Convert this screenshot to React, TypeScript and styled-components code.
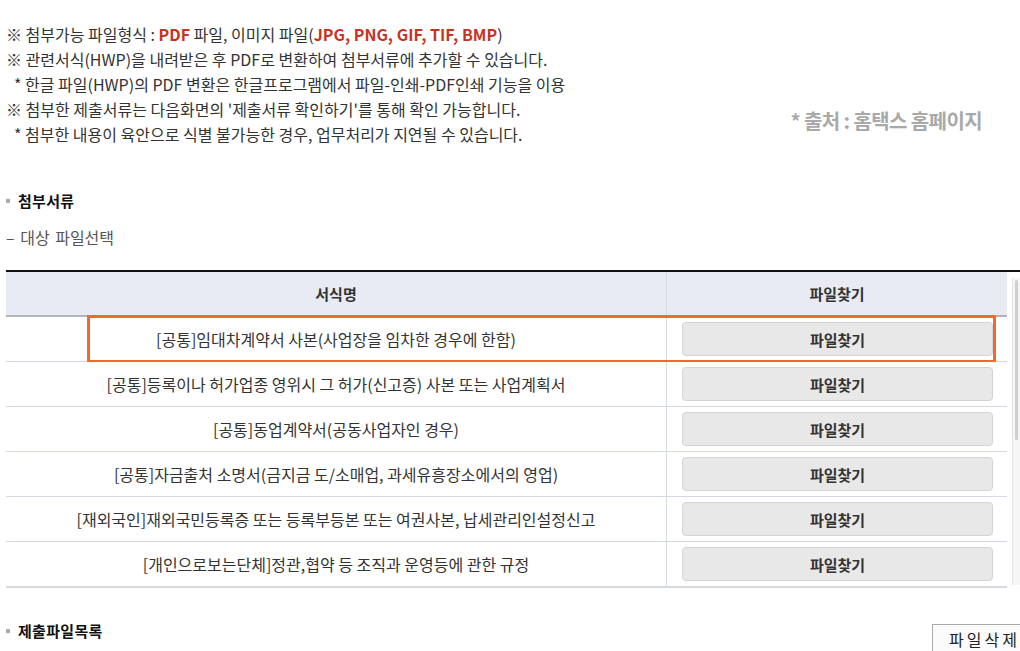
import React from "react";
import styled, { createGlobalStyle } from "styled-components";

const GlobalStyle = createGlobalStyle`
  html, body {
    margin: 0;
    padding: 0;
    background: #fff;
    overflow: hidden;
  }
  body {
    font-family: "Noto Sans CJK KR", "Noto Sans", sans-serif;
    color: #333;
  }
`;

const Page = styled.div`
  width: 1020px;
  padding-left: 6px;
  box-sizing: border-box;
`;

const NoticeArea = styled.div`
  display: flex;
  justify-content: space-between;
  padding-top: 22px;
`;

const Notes = styled.div`
  font-size: 16px;
  line-height: 25px;
`;

const NoteLine = styled.div<{ $sub?: boolean }>`
  padding-left: ${(p) => (p.$sub ? "8px" : "0")};
  white-space: nowrap;
`;

const Red = styled.b`
  color: #c8321f;
`;

const Source = styled.div`
  align-self: flex-end;
  margin: 0 38px 14px 0;
  font-size: 20px;
  line-height: 24px;
  font-weight: 700;
  color: #a9a9a9;
  letter-spacing: -0.6px;
`;

const SectionTitle = styled.div<{ $top: number }>`
  display: flex;
  align-items: center;
  gap: 8px;
  margin-top: ${(p) => p.$top}px;
  font-size: 15px;
  line-height: 22px;
  font-weight: 700;
  color: #111;
  letter-spacing: 0.3px;

  &::before {
    content: "";
    width: 4px;
    height: 4px;
    background: #a8a8a8;
  }
`;

const SubTitle = styled.div`
  margin-top: 14px;
  font-size: 16px;
  line-height: 22px;
  color: #555;
  word-spacing: 2px;
`;

const TableArea = styled.div`
  margin-top: 22px;
  border-top: 2px solid #111;
  display: flex;
`;

const Table = styled.div`
  width: 1001px;
`;

const Row = styled.div<{ $head?: boolean }>`
  position: relative;
  display: grid;
  grid-template-columns: 660px 1fr;
  height: ${(p) => (p.$head ? "43px" : "44px")};
  background: ${(p) => (p.$head ? "#e8ebf3" : "#fff")};
  border-bottom: ${(p) => (p.$head ? "2px solid #b4b4b4" : "1px solid #d3dae6")};

  &:last-child {
    border-bottom: 2px solid #d6d9de;
  }
`;

const Cell = styled.div<{ $head?: boolean; $right?: boolean }>`
  display: flex;
  align-items: center;
  justify-content: ${(p) => (p.$right && !p.$head ? "flex-start" : "center")};
  font-size: ${(p) => (p.$head ? "15px" : "16px")};
  font-weight: ${(p) => (p.$head ? 700 : 400)};
  color: #333;
  border-left: ${(p) => (p.$right ? "1px solid #d5dce8" : "none")};
`;

const FindButton = styled.button`
  width: 311px;
  height: 34px;
  margin-left: 15px;
  border: 1px solid #d4d4d4;
  border-radius: 4px;
  background: #e9e8e8;
  font-family: inherit;
  font-size: 15px;
  font-weight: 700;
  color: #333;
`;

const Highlight = styled.div`
  position: absolute;
  top: -2px;
  left: 81px;
  right: 11px;
  height: 48px;
  border: 3px solid #f26a2b;
  box-sizing: border-box;
  pointer-events: none;
`;

const ScrollTrack = styled.div`
  margin: 6px 0 0 5px;
  width: 8px;
  height: 307px;
  background: #f6f6f6;
  border-left: 1px solid #e4e4e4;
  box-sizing: border-box;
  display: flex;
  justify-content: center;
`;

const ScrollThumb = styled.div`
  margin-top: 2px;
  width: 3px;
  height: 160px;
  border-radius: 2px;
  background: #cfcfcf;
`;

const BottomRow = styled.div`
  display: flex;
  justify-content: space-between;
  align-items: flex-start;
  margin-top: 32px;
`;

const DeleteButton = styled.button`
  flex-shrink: 0;
  margin-top: 4px;
  margin-right: -14px;
  padding: 2px 14px 0 16px;
  height: 30px;
  border: 1px solid #a9a9a9;
  border-right: none;
  border-bottom: none;
  background: #fbfbfb;
  font-family: "Noto Sans CJK KR", sans-serif;
  font-size: 16px;
  letter-spacing: 3px;
  color: #222;
  display: flex;
  align-items: flex-start;
  white-space: nowrap;
`;

const rows = [
  "[공통]임대차계약서 사본(사업장을 임차한 경우에 한함)",
  "[공통]등록이나 허가업종 영위시 그 허가(신고증) 사본 또는 사업계획서",
  "[공통]동업계약서(공동사업자인 경우)",
  "[공통]자금출처 소명서(금지금 도/소매업, 과세유흥장소에서의 영업)",
  "[재외국인]재외국민등록증 또는 등록부등본 또는 여권사본, 납세관리인설정신고",
  "[개인으로보는단체]정관,협약 등 조직과 운영등에 관한 규정",
];

function App() {
  return (
    <Page>
      <GlobalStyle />
      <NoticeArea>
        <Notes>
          <NoteLine>
            ※ 첨부가능 파일형식 : <Red>PDF</Red> 파일, 이미지 파일(
            <Red>JPG, PNG, GIF, TIF, BMP</Red>)
          </NoteLine>
          <NoteLine>※ 관련서식(HWP)을 내려받은 후 PDF로 변환하여 첨부서류에 추가할 수 있습니다.</NoteLine>
          <NoteLine $sub>* 한글 파일(HWP)의 PDF 변환은 한글프로그램에서 파일-인쇄-PDF인쇄 기능을 이용</NoteLine>
          <NoteLine>※ 첨부한 제출서류는 다음화면의 '제출서류 확인하기'를 통해 확인 가능합니다.</NoteLine>
          <NoteLine $sub>* 첨부한 내용이 육안으로 식별 불가능한 경우, 업무처리가 지연될 수 있습니다.</NoteLine>
        </Notes>
        <Source>* 출처 : 홈택스 홈페이지</Source>
      </NoticeArea>

      <SectionTitle $top={43}>첨부서류</SectionTitle>
      <SubTitle>– 대상 파일선택</SubTitle>

      <TableArea>
        <Table>
          <Row $head>
            <Cell $head>서식명</Cell>
            <Cell $head $right>파일찾기</Cell>
          </Row>
          {rows.map((name, i) => (
            <Row key={name}>
              <Cell>{name}</Cell>
              <Cell $right>
                <FindButton>파일찾기</FindButton>
              </Cell>
              {i === 0 && <Highlight />}
            </Row>
          ))}
        </Table>
        <ScrollTrack>
          <ScrollThumb />
        </ScrollTrack>
      </TableArea>

      <BottomRow>
        <SectionTitle $top={0}>제출파일목록</SectionTitle>
        <DeleteButton>파일삭제</DeleteButton>
      </BottomRow>
    </Page>
  );
}

export default App;
